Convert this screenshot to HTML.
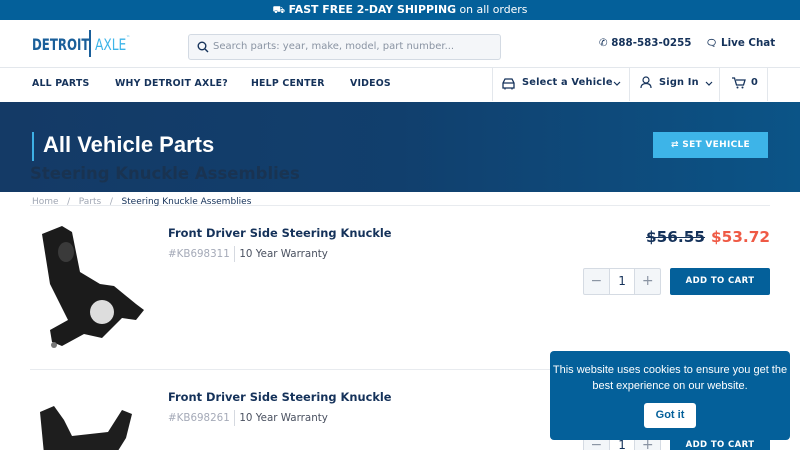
<!DOCTYPE html>
<html><head><meta charset="utf-8"><style>
*{margin:0;padding:0;box-sizing:border-box}
html,body{width:800px;height:450px;overflow:hidden}
body{background:#fff;font-family:"DejaVu Sans","Liberation Sans",sans-serif;position:relative;color:#15325a}
.a{position:absolute;white-space:nowrap}
.top{left:0;top:0;width:800px;height:20px;background:#04609a;color:#fff;font-size:10.9px;text-align:center;line-height:20px}
.nav{font-size:9.4px;font-weight:bold;top:78px;letter-spacing:.2px}
.hero{left:0;top:102px;width:800px;height:90px;background:linear-gradient(90deg,#143a66 0%,#113f6d 50%,#0b5487 100%)}
.vl{top:68px;width:1px;height:33px;background:#e3e7ec}
.qty{width:78px;height:27px;border:1px solid #d5dbe3;border-radius:2px;background:#f3f6f9;display:flex}
.qty div{flex:1;text-align:center;line-height:25px;color:#8a94a3;font-size:14px}
.qty div.m{background:#fff;border-left:1px solid #d5dbe3;border-right:1px solid #d5dbe3;color:#15325a;font-size:12px}
.btn{width:100px;height:27px;background:#04609a;color:#fff;font-size:8.5px;font-weight:bold;text-align:center;line-height:27px;border-radius:2px;letter-spacing:.4px}
</style></head><body>
<div class="a top"><span style="font-size:10px">⛟</span> <b>FAST FREE 2-DAY SHIPPING</b> on all orders</div>

<div class="a" style="left:32px;top:35px;font-size:16px;font-weight:bold;color:#1a5f9a;font-family:'DejaVu Sans Condensed','DejaVu Sans',sans-serif;transform:scaleX(.82);transform-origin:left">DETROIT</div>
<div class="a" style="left:89px;top:30px;width:2px;height:27px;background:#1a5f9a"></div>
<div class="a" style="left:95px;top:35px;font-size:16px;color:#3db4e8;font-family:'DejaVu Sans Condensed','DejaVu Sans',sans-serif;transform:scaleX(.85);transform-origin:left">AXLE<span style="font-size:5px;vertical-align:top">™</span></div>

<div class="a" style="left:188px;top:34px;width:313px;height:26px;background:#f4f6f9;border:1px solid #d3dae3;border-radius:3px"></div>
<svg class="a" style="left:197px;top:41px" width="12" height="12" viewBox="0 0 12 12"><circle cx="5" cy="5" r="3.8" fill="none" stroke="#15325a" stroke-width="1.4"/><path d="M8 8l3 3" stroke="#15325a" stroke-width="1.4"/></svg>
<div class="a" style="left:213px;top:41px;font-size:10px;color:#8a94a3">Search parts: year, make, model, part number...</div>

<div class="a" style="left:599px;top:37px;font-size:10.3px;font-weight:bold">✆ 888-583-0255</div>
<div class="a" style="left:706px;top:37px;font-size:10.3px;font-weight:bold"><span style="font-size:9px">🗨</span> Live Chat</div>

<div class="a" style="left:0;top:67px;width:800px;height:1px;background:#e3e7ec"></div>
<div class="a nav" style="left:32px">ALL PARTS</div>
<div class="a nav" style="left:115px">WHY DETROIT AXLE?</div>
<div class="a nav" style="left:251px">HELP CENTER</div>
<div class="a nav" style="left:350px">VIDEOS</div>
<div class="a vl" style="left:492px"></div><div class="a vl" style="left:629px"></div><div class="a vl" style="left:719px"></div><div class="a vl" style="left:767px"></div>
<svg class="a" style="left:501px;top:77px" width="15" height="13" viewBox="0 0 15 13"><path d="M2 6l2-4h7l2 4v5H2z M2 6h11 M4 11v1.5 M11 11v1.5" fill="none" stroke="#15325a" stroke-width="1.3"/></svg>
<div class="a nav" style="left:522px;font-size:9.8px;top:77px">Select a Vehicle</div>
<svg class="a" style="left:613px;top:81px" width="8" height="5" viewBox="0 0 8 5"><path d="M1 1l3 3 3-3" fill="none" stroke="#15325a" stroke-width="1.2"/></svg>
<svg class="a" style="left:640px;top:76px" width="12" height="13" viewBox="0 0 12 13"><circle cx="6" cy="4" r="3" fill="none" stroke="#15325a" stroke-width="1.2"/><path d="M1 12c0-3 2-4.5 5-4.5s5 1.5 5 4.5" fill="none" stroke="#15325a" stroke-width="1.2"/></svg>
<div class="a nav" style="left:659px;font-size:9.8px;top:77px">Sign In</div>
<svg class="a" style="left:705px;top:81px" width="8" height="5" viewBox="0 0 8 5"><path d="M1 1l3 3 3-3" fill="none" stroke="#15325a" stroke-width="1.2"/></svg>
<svg class="a" style="left:732px;top:77px" width="14" height="12" viewBox="0 0 14 12"><path d="M0 1h2.5l2 7h7l1.5-5H4" fill="none" stroke="#15325a" stroke-width="1.3"/><circle cx="5.5" cy="10.5" r="1" fill="#15325a"/><circle cx="10.5" cy="10.5" r="1" fill="#15325a"/></svg>
<div class="a nav" style="left:751px;font-size:9.8px;top:77px">0</div>

<div class="a hero"></div>
<div class="a" style="left:32px;top:132px;width:2px;height:29px;background:#3eb0e5"></div>
<div class="a" style="left:43px;top:132px;font-size:22px;font-weight:bold;color:#fff;font-family:'Liberation Sans',sans-serif">All Vehicle Parts</div>
<div class="a" style="left:30px;top:164px;font-size:16.5px;font-weight:bold;color:#1c3048;opacity:.7">Steering Knuckle Assemblies</div>
<div class="a" style="left:653px;top:132px;width:115px;height:26px;background:#3db4e8;color:#fff;font-size:9px;font-weight:bold;text-align:center;line-height:26px;letter-spacing:.3px">⇄ SET VEHICLE</div>

<div class="a" style="left:30px;top:205px;width:740px;height:1px;background:#e8ebef"></div>
<div class="a" style="left:32px;top:197px;font-size:9px;color:#a0a7b4">Home &nbsp; / &nbsp; Parts &nbsp; / &nbsp; <span style="color:#15325a">Steering Knuckle Assemblies</span></div>

<svg class="a" style="left:30px;top:222px" width="120" height="130" viewBox="0 0 120 130"><path d="M12 12l20-8 10 6 8 40 20 12 14 2 22 18 8 6-8 10-14-2-20 20-18-4-22 12-10-4-2-12 18-10-18-36z" fill="#1b1b1b"/><circle cx="72" cy="90" r="12" fill="#ddd"/><ellipse cx="36" cy="30" rx="8" ry="10" fill="#3a3a3a"/><circle cx="24" cy="123" r="3" fill="#777"/></svg>
<div class="a" style="left:168px;top:226px;font-size:11.4px;font-weight:bold">Front Driver Side Steering Knuckle</div>
<div class="a" style="left:168px;top:246px;font-size:10.3px;color:#a5aab8">#KB698311 <span style="display:inline-block;width:1px;height:16px;background:#d5d9e0;vertical-align:middle;margin:0 1px"></span> <span style="color:#4a5160">10 Year Warranty</span></div>
<div class="a" style="left:646px;top:228px;font-size:15.3px;font-weight:bold;text-decoration:line-through">$56.55</div>
<div class="a" style="left:711px;top:228px;font-size:15.3px;font-weight:bold;color:#ef5a45">$53.72</div>
<div class="a qty" style="left:583px;top:268px"><div>−</div><div class="m">1</div><div>+</div></div>
<div class="a btn" style="left:670px;top:268px">ADD TO CART</div>

<div class="a" style="left:30px;top:369px;width:740px;height:1px;background:#e8ebef"></div>
<svg class="a" style="left:30px;top:400px" width="120" height="50" viewBox="0 0 120 50"><path d="M10 12l14-6 10 14 8 16 36-4 14-22 10 4-6 24-10 16H14z" fill="#1e1e1e"/></svg>
<div class="a" style="left:168px;top:390px;font-size:11.4px;font-weight:bold">Front Driver Side Steering Knuckle</div>
<div class="a" style="left:168px;top:410px;font-size:10.3px;color:#a5aab8">#KB698261 <span style="display:inline-block;width:1px;height:16px;background:#d5d9e0;vertical-align:middle;margin:0 1px"></span> <span style="color:#4a5160">10 Year Warranty</span></div>
<div class="a qty" style="left:583px;top:432px"><div>−</div><div class="m">1</div><div>+</div></div>
<div class="a btn" style="left:670px;top:432px">ADD TO CART</div>

<div class="a" style="left:550px;top:351px;width:240px;height:89px;background:#04609a;border-radius:4px"></div>
<div class="a" style="left:550px;top:362px;width:240px;text-align:center;color:#fff;font-size:11px;line-height:16px;font-family:'Liberation Sans',sans-serif">This website uses cookies to ensure you get the<br>best experience on our website.</div>
<div class="a" style="left:644px;top:403px;width:52px;height:25px;background:#fff;border-radius:3px;color:#04609a;font-size:11px;font-weight:bold;text-align:center;line-height:25px;font-family:'Liberation Sans',sans-serif">Got it</div>
</body></html>
